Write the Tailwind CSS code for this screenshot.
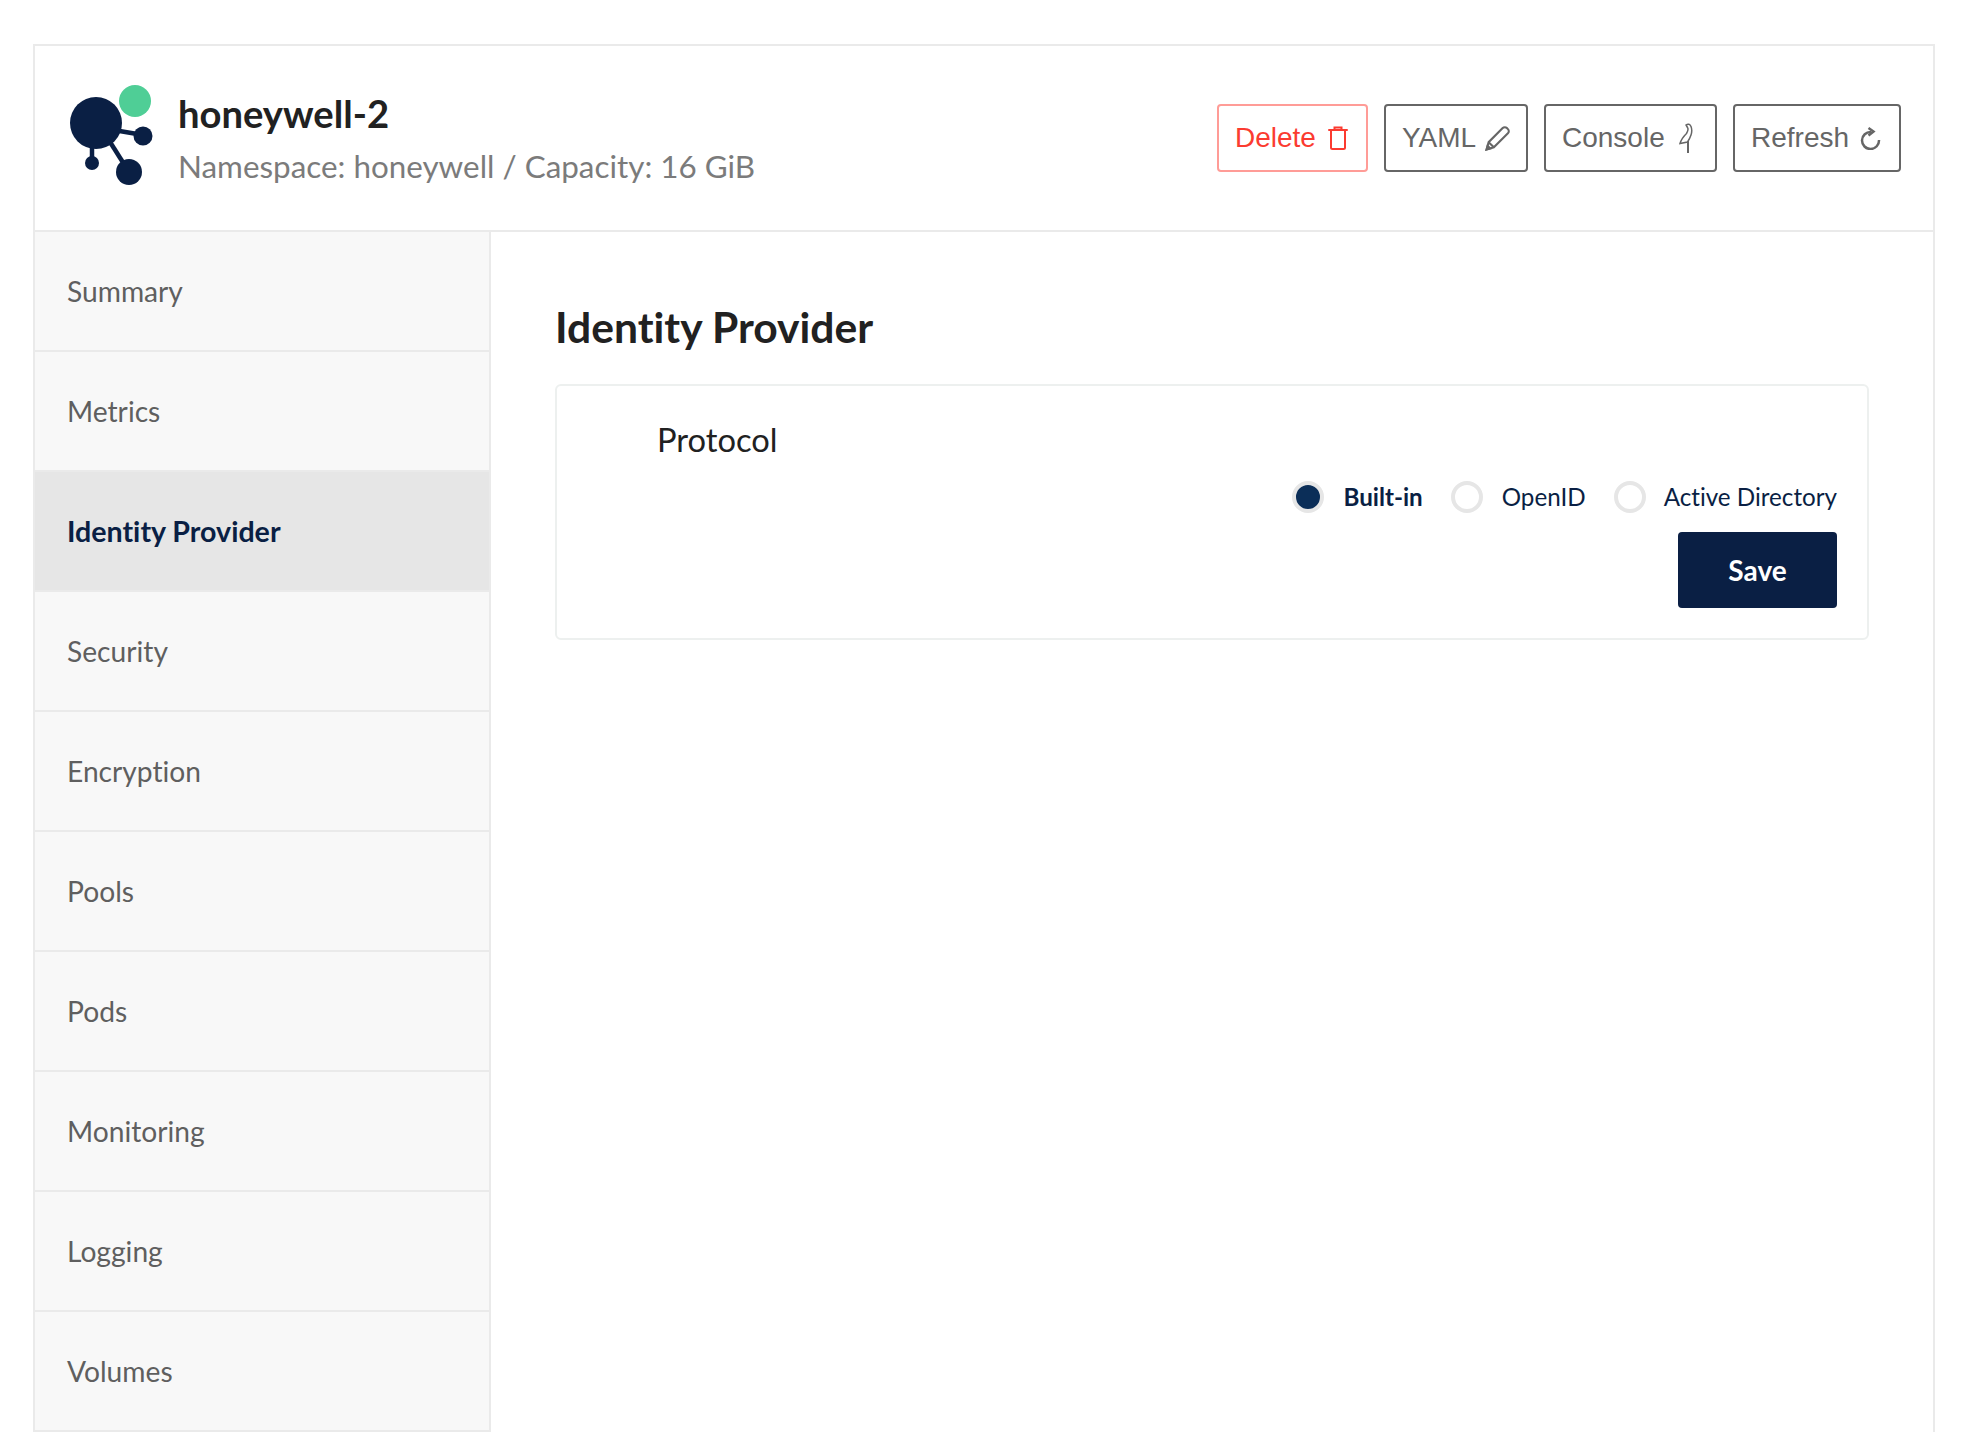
<!DOCTYPE html>
<html lang="en">
  <head>
    <meta charset="UTF-8" />
    <title>honeywell-2</title>
    <script src="https://cdn.jsdelivr.net/npm/@tailwindcss/browser@4"></script>
  </head>
  <body class="bg-white h-[1432px] overflow-hidden font-['Lato',sans-serif] [font-variant-ligatures:none]">
    <div class="pt-[44px] pl-[33px]">
      <div class="w-[1902px] border-2 border-b-0 border-[#eaeaea]">
        <header class="h-[186px] flex items-center border-b-2 border-[#eaeaea] pr-[32px]">
          <svg class="w-[110px] h-[110px] ml-[24px] mb-[2px] shrink-0" viewBox="59 83 110 110">
            <circle cx="135" cy="102" r="16" fill="#4fce96" />
            <g stroke="#0a1f44" stroke-width="4.500">
              <line x1="96" y1="128" x2="143" y2="136" />
              <line x1="92" y1="130" x2="92" y2="164" />
              <line x1="105" y1="135" x2="129" y2="173" />
            </g>
            <circle cx="96" cy="124" r="26" fill="#0a1f44" />
            <circle cx="143" cy="137" r="9.5" fill="#0a1f44" />
            <circle cx="92" cy="164" r="7" fill="#0a1f44" />
            <circle cx="129" cy="173" r="13" fill="#0a1f44" />
          </svg>
          <div class="ml-[9px] flex-1 pb-[1px]">
            <h1 class="text-[38.2px] leading-[48px] font-bold text-[#212121] -mt-[1px]">honeywell-2</h1>
            <p class="text-[31.4px] leading-[40px] mt-[9px] text-[#7b7b7b]">Namespace: honeywell / Capacity: 16 GiB</p>
          </div>
          <div class="flex gap-[16px] font-['Liberation_Sans',sans-serif] text-[28px]">
            <button class="h-[68px] w-[151px] pl-[16px] flex items-center gap-[12px] rounded-[4px] border-2 border-[#ff9c97] text-[#fb3b30]">
              Delete
              <svg class="w-[20px] h-[24px]" viewBox="0 0 20 24" fill="none" stroke="currentColor" stroke-width="2">
                <path d="M1 4h18M6.500 3.500V1.500h7v2" stroke-linecap="round" />
                <path d="M3 4v17.500a1.500 1.500 0 0 0 1.500 1.500h11a1.500 1.500 0 0 0 1.500-1.500V4" />
              </svg>
            </button>
            <button class="h-[68px] w-[144px] pl-[16px] flex items-center gap-[9px] rounded-[4px] border-2 border-[#666] text-[#666]">
              YAML
              <svg class="w-[25px] h-[25px]" viewBox="0 0 24 24" fill="none" stroke="currentColor" stroke-width="2">
                <path d="M1.500 22.500l2-7L17 2a2.800 2.800 0 0 1 4 0l1 1a2.800 2.800 0 0 1 0 4L8.500 20.500z" />
                <path d="M3.500 15.500l5 5M1.500 22.500l1-3.500 2.500 2.500z" fill="currentColor" />
              </svg>
            </button>
            <button class="h-[68px] w-[173px] pl-[16px] flex items-center gap-[14px] rounded-[4px] border-2 border-[#666] text-[#666]">
              Console
              <svg class="w-[16px] h-[30px]" viewBox="0 0 16 30" fill="none" stroke="currentColor" stroke-width="1.500">
                <path d="M7 2C9 .5 11 1 12 3.500 13 6 13 9 12 12 11 15 9.500 17.500 8.500 19L1 20.500C2 17 5 13 7.500 10.500 9 8 9.500 6 8.500 4.500z" />
                <path d="M9 18v12" stroke-width="2" />
              </svg>
            </button>
            <button class="h-[68px] w-[168px] pl-[16px] flex items-center gap-[11px] rounded-[4px] border-2 border-[#666] text-[#666]">
              Refresh
              <svg class="w-[21px] h-[23px]" viewBox="0 0 21 23" fill="none" stroke="currentColor" stroke-width="2.500">
                <path d="M11 5A8.500 8.500 0 1 0 19 13" />
                <path d="M8.500 1l5 3.500-5 4" />
              </svg>
            </button>
          </div>
        </header>
        <div class="flex">
          <nav class="w-[456px] shrink-0 border-r-2 border-[#eaeaea] text-[28.2px] text-[#5f5f5f]">
            <a class="h-[120px] pl-[32px] pt-[1px] flex items-center bg-[#f8f8f8] border-b-2 border-[#eaeaea]">Summary</a>
            <a class="h-[120px] pl-[32px] pt-[1px] flex items-center bg-[#f8f8f8] border-b-2 border-[#eaeaea]">Metrics</a>
            <a class="h-[120px] pl-[32px] pt-[1px] flex items-center bg-[#e6e6e6] border-b-2 border-[#eaeaea] text-[28.6px] font-bold text-[#0a1f44]">Identity Provider</a>
            <a class="h-[120px] pl-[32px] pt-[1px] flex items-center bg-[#f8f8f8] border-b-2 border-[#eaeaea]">Security</a>
            <a class="h-[120px] pl-[32px] pt-[1px] flex items-center bg-[#f8f8f8] border-b-2 border-[#eaeaea]">Encryption</a>
            <a class="h-[120px] pl-[32px] pt-[1px] flex items-center bg-[#f8f8f8] border-b-2 border-[#eaeaea]">Pools</a>
            <a class="h-[120px] pl-[32px] pt-[1px] flex items-center bg-[#f8f8f8] border-b-2 border-[#eaeaea]">Pods</a>
            <a class="h-[120px] pl-[32px] pt-[1px] flex items-center bg-[#f8f8f8] border-b-2 border-[#eaeaea]">Monitoring</a>
            <a class="h-[120px] pl-[32px] pt-[1px] flex items-center bg-[#f8f8f8] border-b-2 border-[#eaeaea]">Logging</a>
            <a class="h-[120px] pl-[32px] pt-[1px] flex items-center bg-[#f8f8f8] border-b-2 border-[#eaeaea]">Volumes</a>
          </nav>
          <main class="flex-1 pl-[64px] pr-[64px] pt-[65px]">
            <h2 class="text-[42.6px] leading-[60px] font-bold text-[#212121]">Identity Provider</h2>
            <section class="mt-[27px] h-[256px] border-2 border-[#edf0ef] rounded-[6px] pt-[30px] pr-[30px]">
              <div class="pl-[100px] text-[32.7px] leading-[48px] text-[#212121]">Protocol</div>
              <div class="mt-[17px] flex justify-end items-center text-[24.2px] leading-[32px] text-[#0a1f44]">
                <span class="w-[32px] h-[32px] rounded-full border-4 border-[#e6e6e6] bg-[#0b2e58]"></span>
                <span class="ml-[19px] font-bold">Built-in</span>
                <span class="ml-[28px] w-[32px] h-[32px] rounded-full border-4 border-[#e6e6e6]"></span>
                <span class="ml-[19px]">OpenID</span>
                <span class="ml-[28px] w-[32px] h-[32px] rounded-full border-4 border-[#e6e6e6]"></span>
                <span class="ml-[18px]">Active Directory</span>
              </div>
              <div class="mt-[19px] flex justify-end">
                <button class="w-[159px] h-[76px] rounded-[4px] bg-[#0a1f44] text-white text-[28px] font-bold">Save</button>
              </div>
            </section>
          </main>
        </div>
      </div>
    </div>
  </body>
</html>
